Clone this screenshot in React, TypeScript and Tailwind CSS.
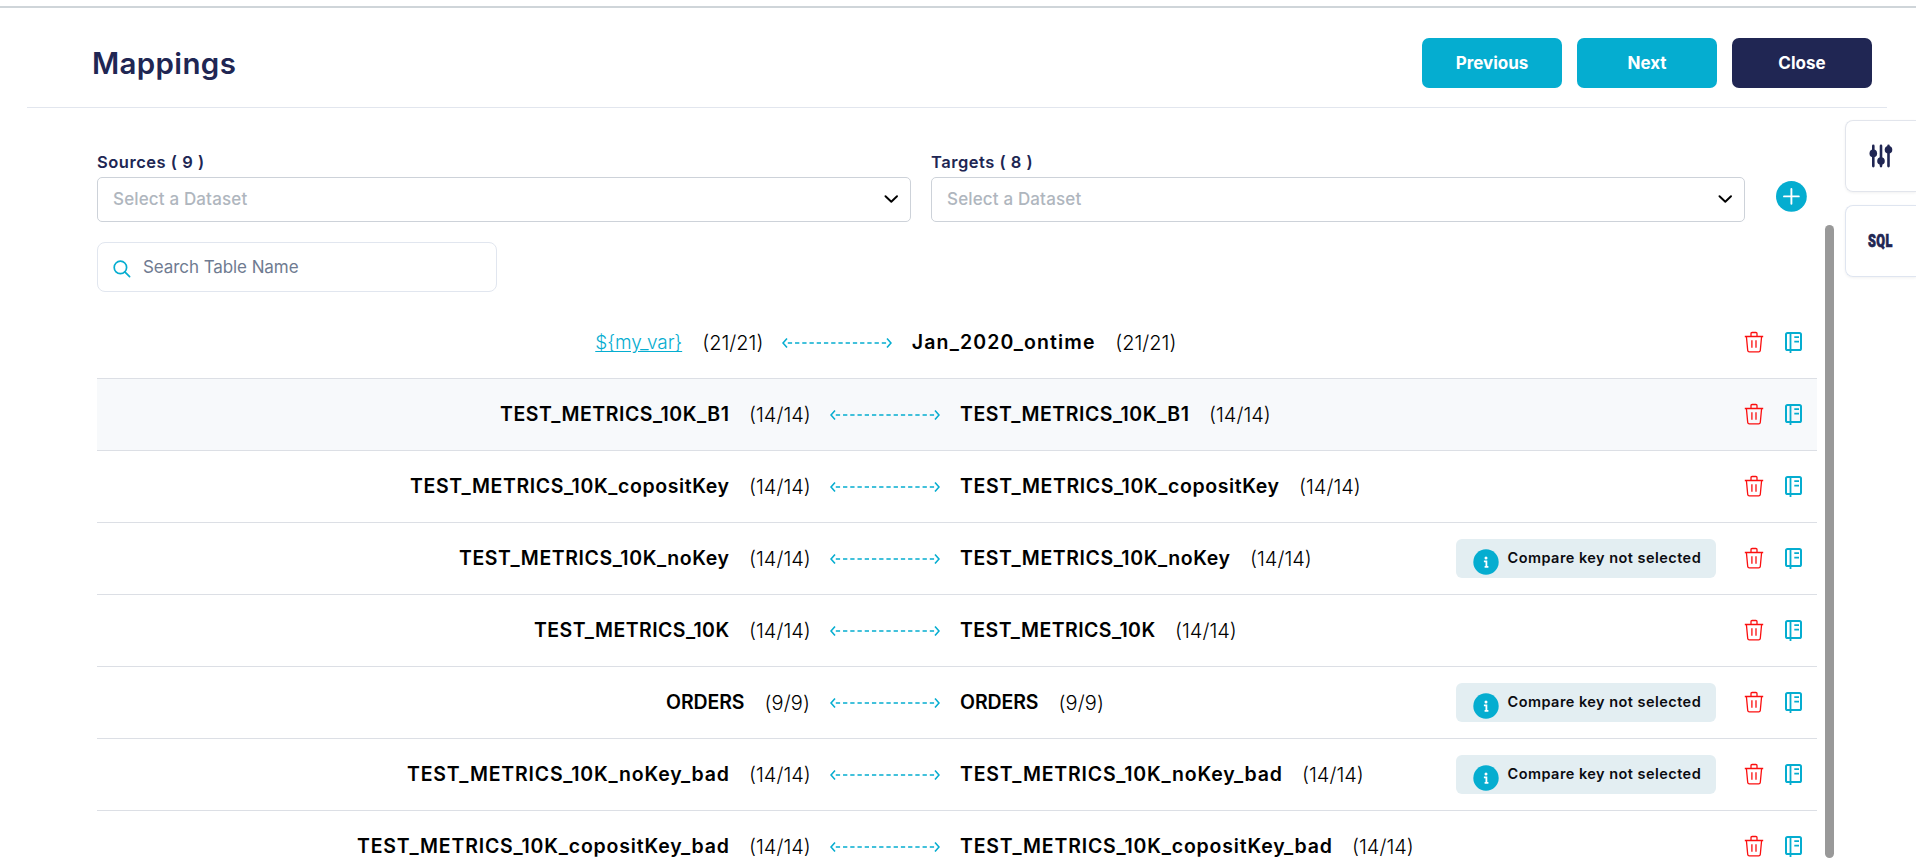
type NameStyle = { text: string; style: string };
type Row = {
  source: NameStyle;
  target: NameStyle;
  count: string;
  link?: boolean;
  active?: boolean;
  missingKey?: boolean;
};

const names = {
  variable: { text: "${my_var}", style: "w-[87px] tracking-[-0.1px]" },
  ontime: { text: "Jan_2020_ontime", style: "w-[183.5px] tracking-[1.15px]" },
  b1: { text: "TEST_METRICS_10K_B1", style: "w-[229px] tracking-[0.52px]" },
  coposit: { text: "TEST_METRICS_10K_copositKey", style: "w-[319px] tracking-[0.6px]" },
  noKey: { text: "TEST_METRICS_10K_noKey", style: "w-[270px] tracking-[0.58px]" },
  base: { text: "TEST_METRICS_10K", style: "w-[195px] tracking-[0.43px]" },
  orders: { text: "ORDERS", style: "w-[78.5px] tracking-[-0.1px]" },
  noKeyBad: { text: "TEST_METRICS_10K_noKey_bad", style: "w-[322px] tracking-[0.8px]" },
  copositBad: { text: "TEST_METRICS_10K_copositKey_bad", style: "w-[372px] tracking-[0.82px]" },
};

const rows: Row[] = [
  { source: names.variable, target: names.ontime, count: "(21/21)", link: true },
  { source: names.b1, target: names.b1, count: "(14/14)", active: true },
  { source: names.coposit, target: names.coposit, count: "(14/14)" },
  { source: names.noKey, target: names.noKey, count: "(14/14)", missingKey: true },
  { source: names.base, target: names.base, count: "(14/14)" },
  { source: names.orders, target: names.orders, count: "(9/9)", missingKey: true },
  { source: names.noKeyBad, target: names.noKeyBad, count: "(14/14)", missingKey: true },
  { source: names.copositBad, target: names.copositBad, count: "(14/14)" },
];

const countWidths: Record<string, string> = {
  "(21/21)": "w-[59.5px]",
  "(14/14)": "w-[61px]",
  "(9/9)": "w-[45.5px] tracking-[0.1px]",
};

function ArrowIcon() {
  return (
    <svg className="h-3 w-[110px] shrink-0" viewBox="0 0 110 12" fill="none" stroke="#05add0">
      <path d="M5 1.5L1 6L5 10.5M105 1.5L109 6L105 10.5" strokeWidth="1.6" />
      <path d="M5.8 6H105" strokeWidth="1.5" strokeDasharray="4.3 2.93" />
    </svg>
  );
}

function TrashIcon() {
  return (
    <svg className="h-[22px] w-5 shrink-0" viewBox="0 0 20 22" fill="none" stroke="#fb0f0f" strokeWidth="1.3">
      <path d="M0.8 5.5H19.2M7 5.3V2.6Q7 1.5 8.1 1.5H11.9Q13 1.5 13 2.6V5.3" />
      <path d="M2.4 5.5L3.7 19.4Q3.9 20.9 5.3 20.9H14.7Q16.1 20.9 16.3 19.4L17.6 5.5" />
      <path d="M7.9 9.3V16.8M12 9.3V16.8" />
    </svg>
  );
}

function BookIcon() {
  return (
    <svg className="h-[22px] w-[19px] shrink-0" viewBox="0 0 19 22" fill="none" stroke="#05add0" strokeWidth="2">
      <rect x="2" y="2" width="15" height="17" rx="1.6" />
      <path d="M6.5 2V22" strokeWidth="1.8" />
      <path d="M10.3 6.2H15M10.3 10.7H15" strokeWidth="1.8" />
    </svg>
  );
}

function InfoIcon() {
  return (
    <svg className="mt-[7px] h-[26px] w-[26px]" viewBox="0 0 26 26">
      <circle cx="13" cy="13" r="12.7" fill="#05add0" />
      <circle cx="13" cy="9" r="1.5" fill="#fff" />
      <path d="M10.9 12.3H13.4V17.6M11.6 17.8H15.4" fill="none" stroke="#fff" strokeWidth="1.8" />
    </svg>
  );
}

function MissingKeyBadge() {
  return (
    <div className="mr-[27.5px] flex h-[39px] w-[260px] items-center rounded-md bg-[#e3eef2] pl-[17px]">
      <InfoIcon />
      <span className="-mt-px ml-[8.5px] whitespace-nowrap text-[14.5px] font-semibold tracking-[0.46px] text-[#0b0b10]">
        Compare key not selected
      </span>
    </div>
  );
}

function Name({ name, link }: { name: NameStyle; link?: boolean }) {
  return (
    <span
      className={`${name.style} shrink-0 whitespace-nowrap ${
        link
          ? "pt-px text-[19px] font-light text-[#05add0] underline underline-offset-2"
          : "text-[19.5px] font-semibold text-black"
      }`}
    >
      {name.text}
    </span>
  );
}

function Count({ value }: { value: string }) {
  return (
    <span className={`${countWidths[value]} shrink-0 whitespace-nowrap text-[20px] font-light text-black`}>{value}</span>
  );
}

function MappingRow({ row }: { row: Row }) {
  return (
    <div
      className={`grid h-[72px] shrink-0 grid-cols-1 grid-rows-1 border-b border-[#dcdfe5] ${
        row.active ? "bg-[#f7f9fb]" : ""
      }`}
    >
      <div className="col-start-1 row-start-1 mr-[144px] flex items-center justify-center gap-5 pt-px">
        <Name name={row.source} link={row.link} />
        <Count value={row.count} />
        <ArrowIcon />
        <Name name={row.target} />
        <Count value={row.count} />
      </div>
      <div className="col-start-1 row-start-1 flex items-center justify-self-end pr-3.5">
        {row.missingKey && <MissingKeyBadge />}
        <div className="flex gap-[20.5px] pb-px">
          <TrashIcon />
          <BookIcon />
        </div>
      </div>
    </div>
  );
}

function DatasetSelect({ label }: { label: string }) {
  return (
    <div className="w-[814px]">
      <div className="h-[25px] whitespace-pre text-[16.5px] font-semibold leading-[20px] tracking-[0.52px] text-[#202653]">
        {label}
      </div>
      <div className="flex h-[45px] items-center justify-between rounded-[5px] border border-[#cdd2d9] pl-[15px] pr-3">
        <span className="text-[17px] font-medium tracking-[0.15px] text-[#afb6be]">Select a Dataset</span>
        <svg className="mb-0.5 h-2.5 w-3.5" viewBox="0 0 14 10" fill="none" stroke="#000" strokeWidth="1.9">
          <path d="M1.5 2.2L7.3 7.8L13 2.2" strokeLinecap="round" strokeLinejoin="round" />
        </svg>
      </div>
    </div>
  );
}

function HeaderButton({ label, dark }: { label: string; dark?: boolean }) {
  return (
    <button
      className={`h-[50px] w-[140px] rounded-[7px] pt-0.5 text-[17px] font-bold text-white ${
        dark ? "bg-[#202653]" : "bg-[#05add0]"
      }`}
    >
      {label}
    </button>
  );
}

export default function App() {
  return (
    <div className="flex h-[867px] w-[1916px] flex-col overflow-hidden bg-white font-['Inter','Liberation_Sans',sans-serif]">
      <div className="h-[8px] shrink-0 border-b-2 border-[#cfd5d9]" />
      <header className="ml-[27px] mr-[29px] flex h-[100px] shrink-0 items-center justify-between border-b border-[#e2e6ee] pl-[65px] pr-[15px] pt-2.5">
        <h1 className="pt-px text-[29.5px] font-semibold tracking-[0.35px] text-[#202653]">Mappings</h1>
        <div className="flex gap-[15px]">
          <HeaderButton label="Previous" />
          <HeaderButton label="Next" />
          <HeaderButton label="Close" dark />
        </div>
      </header>

      <div className="flex min-h-0 flex-1">
        <main className="ml-[97px] flex w-[1720px] flex-col pt-11">
          <div className="flex gap-5">
            <DatasetSelect label="Sources ( 9 )" />
            <DatasetSelect label="Targets ( 8 )" />
            <svg className="ml-[10px] mt-[28px] h-8 w-8" viewBox="0 0 32 32">
              <circle cx="16.4" cy="16.4" r="15.4" fill="#05add0" />
              <path d="M16.4 9V23.8M9 16.4H23.8" stroke="#fff" strokeWidth="1.9" strokeLinecap="round" />
            </svg>
          </div>

          <div className="mt-5 flex h-[50px] w-[400px] shrink-0 items-center rounded-lg border border-[#e1e6ef] pl-[15px]">
            <svg className="mt-1 h-[18px] w-[18px]" viewBox="0 0 18 18" fill="none" stroke="#05add0" strokeWidth="1.7">
              <circle cx="7.4" cy="7.4" r="6.2" />
              <path d="M11.8 11.8L16.6 16.6" strokeLinecap="round" />
            </svg>
            <span className="ml-3 pt-0.5 text-[17px] tracking-[-0.08px] text-[#6f7b91]">Search Table Name</span>
          </div>

          <div className="mt-[15px] flex flex-col">
            {rows.map((row) => (
              <MappingRow key={row.source.text} row={row} />
            ))}
          </div>
        </main>

        <div className="ml-2 mt-[117px] h-[633px] w-[9px] shrink-0 rounded-full bg-[#999999]" />

        <aside className="ml-[11px] mt-3 flex w-[71px] shrink-0 flex-col gap-[13px]">
          <div className="flex h-[72px] items-center rounded-l-lg border border-r-0 border-[#e2e5ec] pl-[23px] shadow-[0_1px_3px_rgba(0,0,0,0.06)]">
            <svg className="h-6 w-6" viewBox="0 0 24 24" fill="#202653" stroke="#202653" strokeWidth="2.6" strokeLinecap="round">
              <path d="M4.3 1.9V22.1M12 1.9V22.1M19.5 1.9V22.1" />
              <g stroke="none">
                <circle cx="4.3" cy="9.4" r="3.8" />
                <circle cx="12" cy="17" r="3.8" />
                <circle cx="19.5" cy="5.7" r="3.8" />
              </g>
            </svg>
          </div>
          <div className="flex h-[72px] items-center rounded-l-lg border border-r-0 border-[#dfe5f0] pl-[22px] shadow-[0_1px_3px_rgba(0,0,0,0.06)]">
            <span className="origin-left scale-x-[0.7] font-['Roboto',sans-serif] text-[18px] font-black leading-none tracking-[0.6px] text-[#202653] [-webkit-text-stroke:0.7px_#202653]">
              SQL
            </span>
          </div>
        </aside>
      </div>
    </div>
  );
}
